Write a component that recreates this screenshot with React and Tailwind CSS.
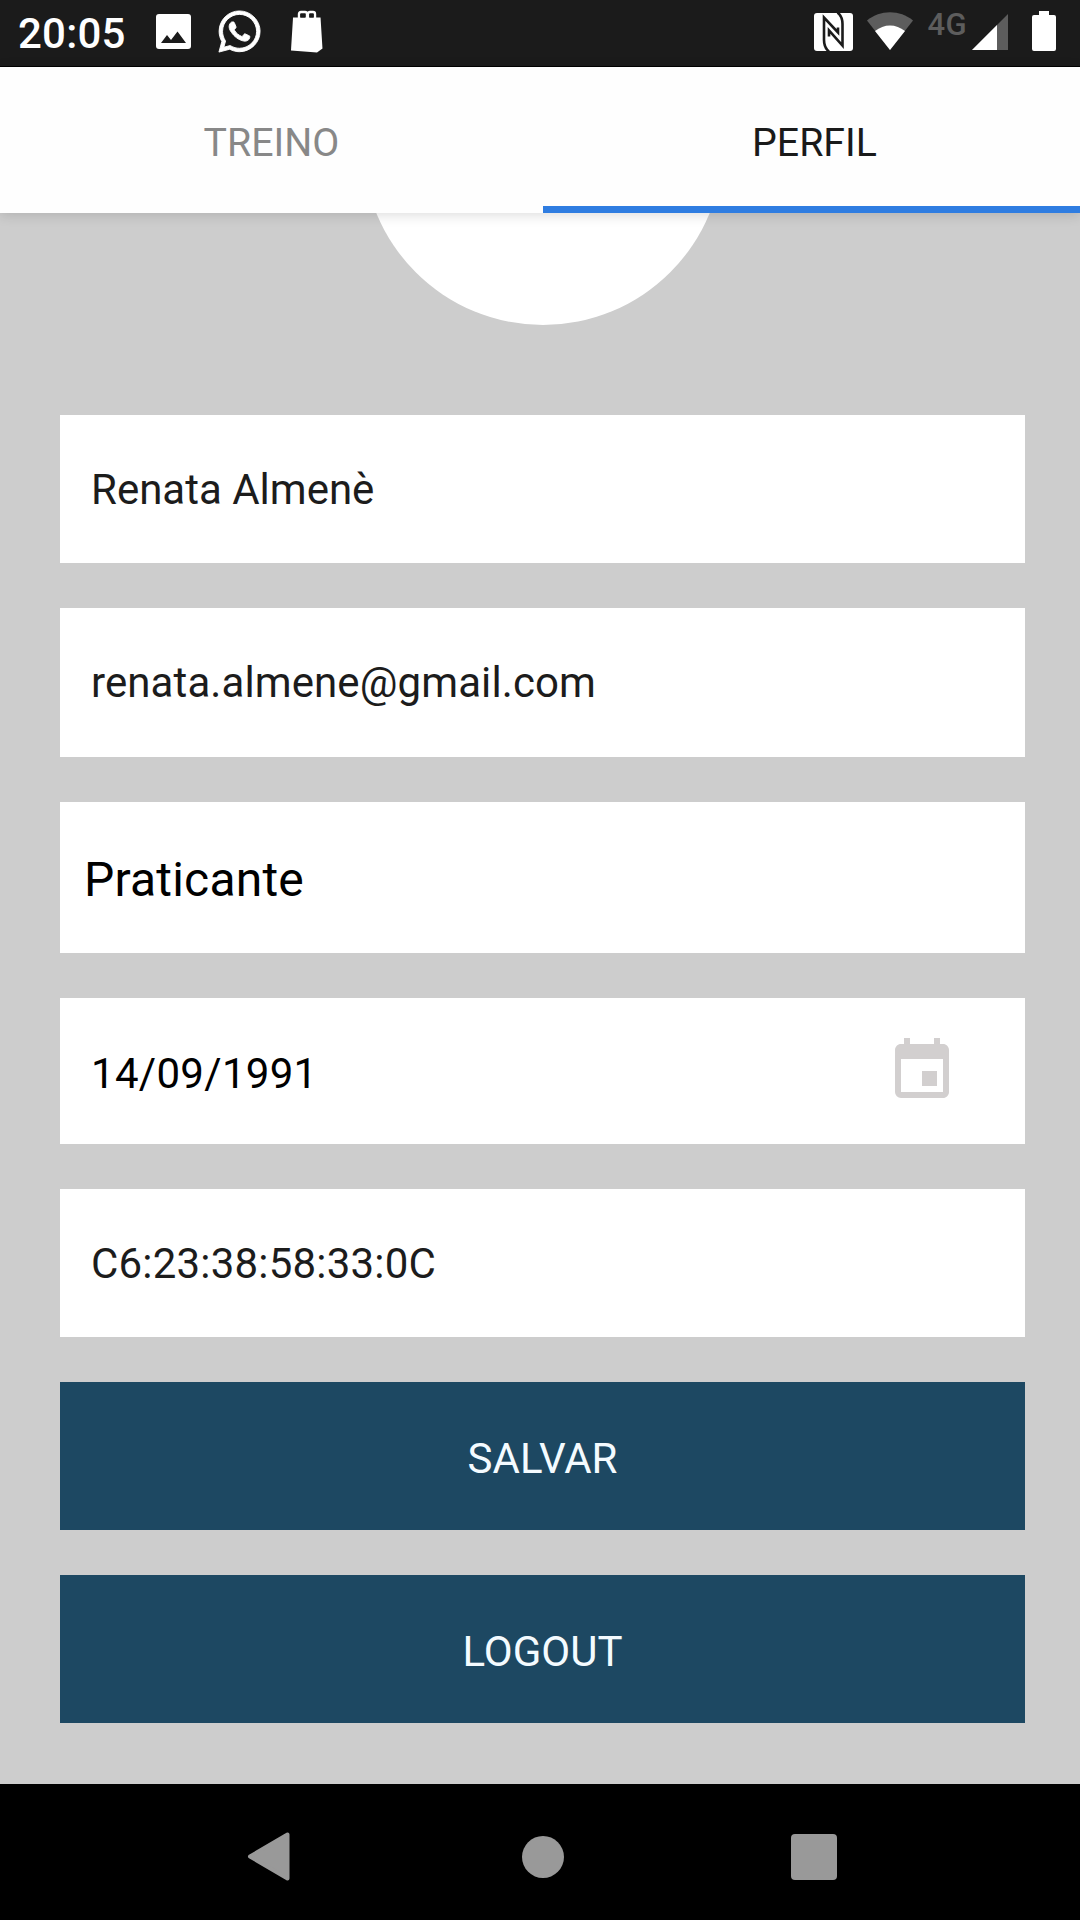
import { useState } from 'react';
import { MdEvent } from 'react-icons/md';
import { FaWhatsapp } from 'react-icons/fa';

const ImageIcon = () => (
    <svg width="35" height="35" viewBox="0 0 35 35" className="mt-[14px] ml-[30px]">
        <rect width="35" height="35" rx="3" fill="#fff" />
        <path d="M5 29l6-8 4 5 6.500-8.500L30 29z" fill="#1b1b1b" />
    </svg>
);

const BagIcon = () => (
    <svg width="32" height="43" viewBox="0 0 32 43" className="mt-[10px] ml-[28px]">
        <path d="M2 7.500h27.500l2 31-5.500 4L0 40.500z" fill="#fff" />
        <path d="M8 9V4q0-2 2-2h4q2 0 2 2v5M17 9V4q0-2 2-2h3q2 0 2 2v5" fill="none" stroke="#fff" strokeWidth="2.400" />
        <path d="M9.500 4h4.500v3.500H9.500zM18.500 4h4v3.500h-4z" fill="#1b1b1b" />
    </svg>
);

const NfcIcon = () => (
    <svg width="39" height="38" viewBox="0 0 39 38" className="mt-[12.500px]">
        <rect width="39" height="38" rx="3" fill="#fff" />
        <path d="M15 38.500C10.500 35 10 31 10 27V4.500L24 19.500v-5M23.500-.5C28 3 28.500 7 28.500 11v21.500L15 17.500v6" fill="none" stroke="#1b1b1b" strokeWidth="2.600" />
    </svg>
);

const WifiIcon = () => (
    <svg width="46" height="38" viewBox="0 0 46 38" className="mt-[12px] ml-[14px]">
        <path d="M0 8.500C13-2.500 33-2.500 46 8.500L23 38z" fill="#5d5d5d" />
        <path d="M8 19c9-7.500 21-7.500 30 0L23 38z" fill="#fff" />
    </svg>
);

const SignalIcon = () => (
    <svg width="36" height="36" viewBox="0 0 36 36" className="mt-[14px] ml-[5px]">
        <path d="M36 0v36H0z" fill="#5d5d5d" />
        <path d="M25 11v25H0z" fill="#fff" />
    </svg>
);

const BatteryIcon = () => (
    <svg width="24" height="40" viewBox="0 0 24 40" className="mt-[11px] ml-[24px]">
        <path d="M7 0h10v4h5q2 0 2 2v32q0 2-2 2H2q-2 0-2-2V6q0-2 2-2h5z" fill="#fff" />
    </svg>
);

const StatusBar = () => (
    <div className="flex h-[67px] shrink-0 items-start bg-[#1b1b1b] border-b border-black pl-[18px] pr-[24px]">
        <span className="text-[42px] leading-[67px] font-medium tracking-[0.2px] text-white">20:05</span>
        <ImageIcon />
        <FaWhatsapp stroke="currentColor" strokeWidth="10" className="mt-[8px] ml-[25px] size-[47px] text-white" />
        <BagIcon />
        <div className="ml-auto flex items-start">
            <NfcIcon />
            <WifiIcon />
            <span className="ml-[14px] text-[31px] leading-[49px] font-medium tracking-[0.4px] text-[#5d5d5d]">4G</span>
            <SignalIcon />
            <BatteryIcon />
        </div>
    </div>
);

const tabs = [
    { id: 'treino', label: 'TREINO' },
    { id: 'perfil', label: 'PERFIL' },
];

const Tabs = ({ active, onChange }) => (
    <div className="relative z-10 grid h-[146px] shrink-0 grid-cols-[543px_543px] bg-[#fefefe] shadow-[0_2px_12px_rgba(0,0,0,0.14)]">
        {tabs.map((tab) => (
            <button
                key={tab.id}
                onClick={() => onChange(tab.id)}
                className={`border-b-[7px] pt-[14px] text-[39.300px] ${active === tab.id ? 'border-[#2f7de1] text-[#1a1a1a]' : 'border-transparent text-[#888]'}`}
            >
                {tab.label}
            </button>
        ))}
    </div>
);

const Field = ({ className, children }) => (
    <div className={`flex w-full shrink-0 items-center bg-white ${className}`}>{children}</div>
);

const Button = ({ children }) => (
    <button className="h-[148px] w-full shrink-0 bg-[#1d4862] pt-[5px] text-[42px] text-[#f4fbff]">{children}</button>
);

const NavBar = () => (
    <div className="flex h-[136px] shrink-0 items-center bg-black pt-[9px] pl-[247px]">
        <svg width="43" height="49" viewBox="0 0 43 49">
            <path d="M3 24.500L40.500 2.500v44z" fill="#999" stroke="#999" strokeWidth="4" strokeLinejoin="round" />
        </svg>
        <div className="ml-[232px] size-[42px] rounded-full bg-[#999]" />
        <div className="ml-[227px] size-[46px] rounded-[4px] bg-[#999]" />
    </div>
);

export default function App() {
    const [active, setActive] = useState('perfil');

    return (
        <div className="flex h-[1920px] w-[1080px] flex-col overflow-hidden bg-[#cdcdcd] font-['Roboto',sans-serif]">
            <StatusBar />
            <Tabs active={active} onChange={setActive} />
            <div className="flex min-h-0 flex-1 flex-col items-center overflow-hidden pr-[55px] pl-[60px]">
                <div className="mt-[-248px] mb-[90px] size-[360px] shrink-0 rounded-full bg-white" />
                <div className="flex w-full flex-col gap-[45px] text-[42px] text-[#1c1c1c]">
                    <Field className="h-[148px] pl-[31px]">Renata Almenè</Field>
                    <Field className="h-[149px] pl-[31px] tracking-[0.1px]">renata.almene@gmail.com</Field>
                    <Field className="h-[151px] pt-[4px] pl-[24px] text-[48px] tracking-[0.2px] text-black">Praticante</Field>
                    <Field className="h-[146px] justify-between pr-[67px] pl-[31px] text-black">
                        <span className="pt-[5px] tracking-[0.3px]">14/09/1991</span>
                        <MdEvent className="size-[72px] text-[#d2cfcf]" />
                    </Field>
                    <Field className="h-[148px] pl-[31px] tracking-[0.2px]">C6:23:38:58:33:0C</Field>
                    <Button>SALVAR</Button>
                    <Button>LOGOUT</Button>
                </div>
            </div>
            <NavBar />
        </div>
    );
}
